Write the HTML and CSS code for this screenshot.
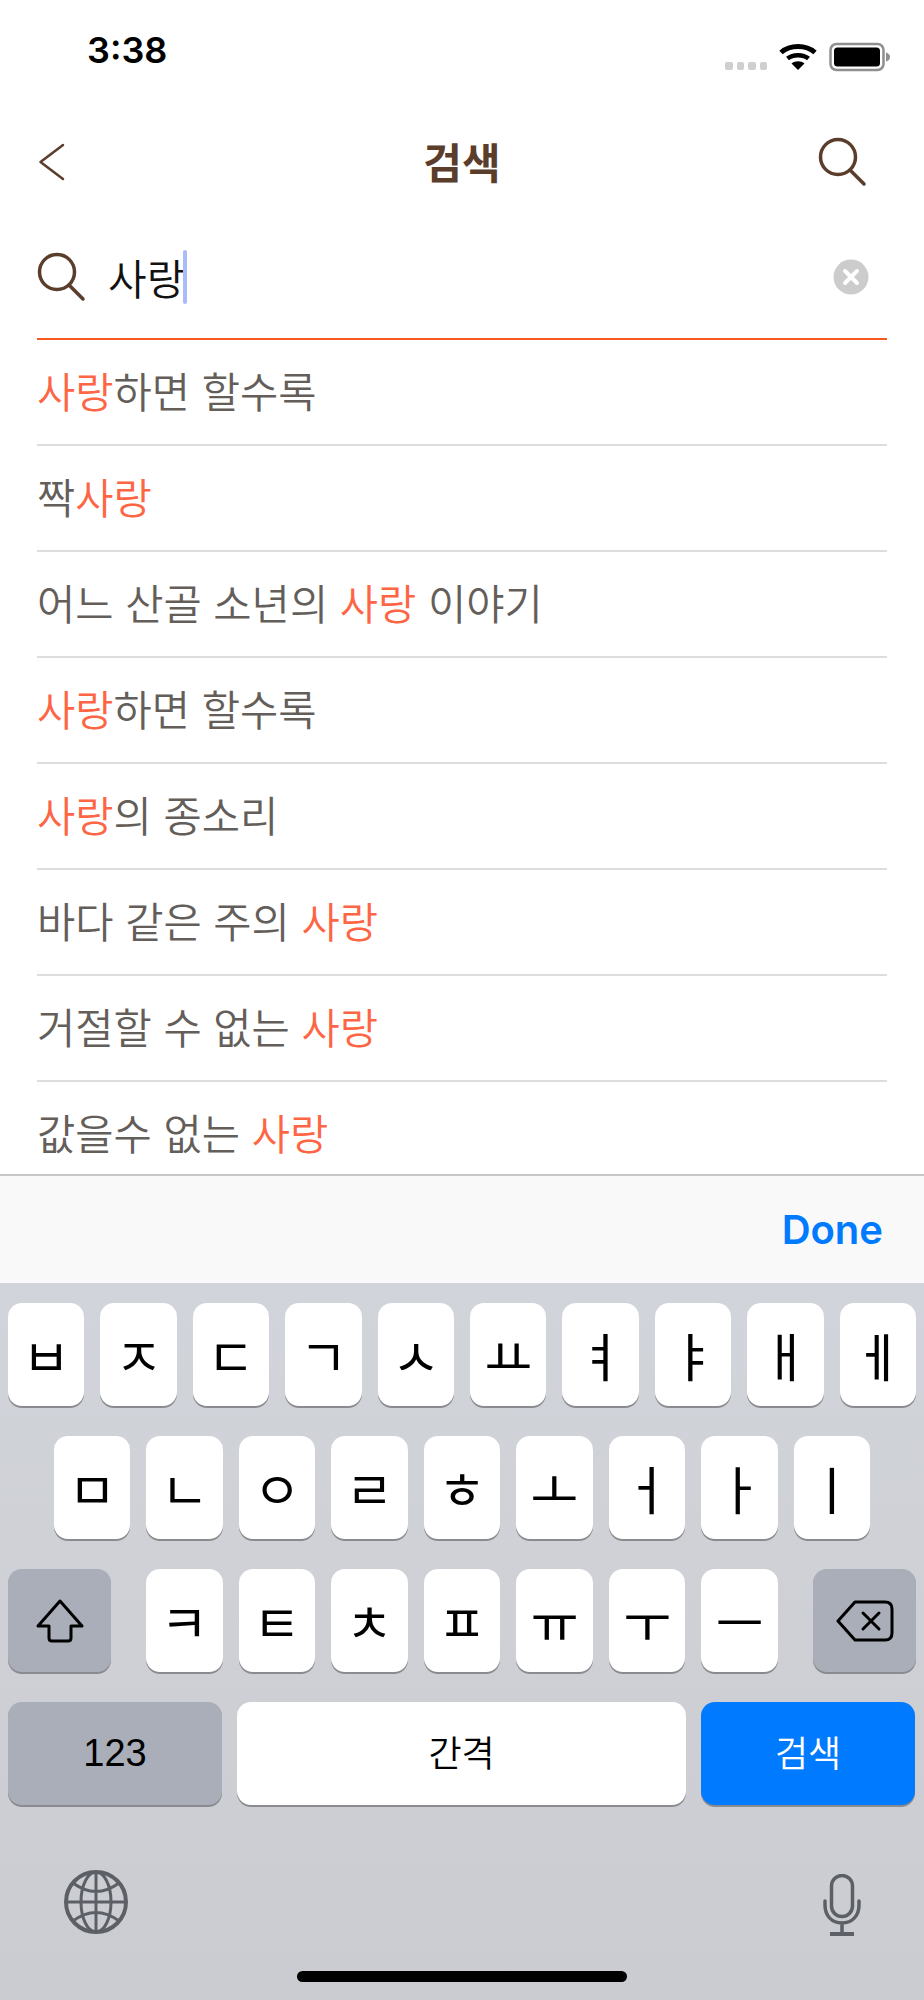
FILE: index.html
```html
<!DOCTYPE html>
<html lang="ko">
  <head>
    <meta charset="UTF-8" />
    <link rel="stylesheet" href="styles.css">
  </head>
  <body>
    <div class="phone">
      <div class="status-bar">
        <span class="time">3:38</span>
        <div class="status-icons">
          <div class="signal"><i></i><i></i><i></i><i></i></div>
          <svg class="wifi" width="38" height="28" viewBox="0 0 38 28">
            <path d="M2 9.5C11 1.500 27 1.500 36 9.500" fill="none" stroke="#000" stroke-width="5"/>
            <path d="M8.500 15.500C14 11 24 11 29.500 15.500" fill="none" stroke="#000" stroke-width="4.500"/>
            <path d="M19 27L12.500 20.500C16 17.500 22 17.500 25.500 20.500Z" fill="#000"/>
          </svg>
          <svg class="battery" width="62" height="30" viewBox="0 0 62 30">
            <rect x="1.500" y="2" width="53" height="26" rx="6" fill="none" stroke="#8f8f8f" stroke-width="2.500"/>
            <rect x="5" y="5.500" width="46" height="19" rx="3.500" fill="#000"/>
            <path d="M57 10.500C60 11.500 61 13 61 15C61 17 60 18.500 57 19.500Z" fill="#8f8f8f"/>
          </svg>
        </div>
      </div>

      <div class="nav-bar">
        <svg class="nav-back" width="30" height="40" viewBox="0 0 30 40">
          <path d="M25 3L2.500 20L25 37" fill="none" stroke="#5a3d2b" stroke-width="2.500" stroke-linecap="round" stroke-linejoin="round"/>
        </svg>
        <h1 class="nav-title">검색</h1>
        <svg class="nav-search" width="50" height="50" viewBox="0 0 50 50">
          <circle cx="20" cy="20" r="17.500" fill="none" stroke="#5a3d2b" stroke-width="3.500"/>
          <path d="M32 33L46 47" fill="none" stroke="#5a3d2b" stroke-width="3.500" stroke-linecap="round"/>
        </svg>
      </div>

      <div class="search-field">
        <svg width="50" height="50" viewBox="0 0 50 50">
          <circle cx="20" cy="20" r="17.500" fill="none" stroke="#5a3d2b" stroke-width="3.500"/>
          <path d="M32 33L46 47" fill="none" stroke="#5a3d2b" stroke-width="3.500" stroke-linecap="round"/>
        </svg>
        <span class="query">사랑</span><span class="caret"></span>
        <svg class="clear" width="36" height="36" viewBox="0 0 36 36">
          <circle cx="18" cy="18" r="17.500" fill="#cccccc"/>
          <path d="M12 12L24 24M24 12L12 24" stroke="#fff" stroke-width="4" stroke-linecap="round"/>
        </svg>
      </div>

      <ul class="results">
        <li><em>사랑</em>하면 할수록</li>
        <li>짝<em>사랑</em></li>
        <li>어느 산골 소년의 <em>사랑</em> 이야기</li>
        <li><em>사랑</em>하면 할수록</li>
        <li><em>사랑</em>의 종소리</li>
        <li>바다 같은 주의 <em>사랑</em></li>
        <li>거절할 수 없는 <em>사랑</em></li>
        <li>값을수 없는 <em>사랑</em></li>
      </ul>

      <div class="accessory">
        <span class="done">Done</span>
      </div>

      <div class="keyboard">
        <div class="key-row">
          <div class="key">ㅂ</div><div class="key">ㅈ</div><div class="key">ㄷ</div><div class="key">ㄱ</div><div class="key">ㅅ</div>
          <div class="key">ㅛ</div><div class="key">ㅕ</div><div class="key">ㅑ</div><div class="key">ㅐ</div><div class="key">ㅔ</div>
        </div>
        <div class="key-row row-mid">
          <div class="key">ㅁ</div><div class="key">ㄴ</div><div class="key">ㅇ</div><div class="key">ㄹ</div><div class="key">ㅎ</div>
          <div class="key">ㅗ</div><div class="key">ㅓ</div><div class="key">ㅏ</div><div class="key">ㅣ</div>
        </div>
        <div class="key-row">
          <div class="key key-fn key-side">
            <svg width="50" height="44" viewBox="0 0 50 44">
              <path d="M25 2L47 27H36V39Q36 42 33 42H17Q14 42 14 39V27H3Z" fill="none" stroke="#000" stroke-width="3" stroke-linejoin="round"/>
            </svg>
          </div>
          <div class="key-group">
            <div class="key">ㅋ</div><div class="key">ㅌ</div><div class="key">ㅊ</div><div class="key">ㅍ</div>
            <div class="key">ㅠ</div><div class="key">ㅜ</div><div class="key">ㅡ</div>
          </div>
          <div class="key key-fn key-side">
            <svg width="58" height="42" viewBox="0 0 58 42">
              <path d="M19 2H49Q56 2 56 9V33Q56 40 49 40H19L2 21Z" fill="none" stroke="#000" stroke-width="3" stroke-linejoin="round"/>
              <path d="M27 13L43 29M43 13L27 29" stroke="#000" stroke-width="3" stroke-linecap="round"/>
            </svg>
          </div>
        </div>
        <div class="key-row row-last">
          <div class="key key-fn key-num">123</div>
          <div class="key key-space">간격</div>
          <div class="key key-go">검색</div>
        </div>
        <div class="kb-bottom">
          <svg width="64" height="64" viewBox="0 0 64 64">
            <g fill="none" stroke="#5c6066" stroke-width="3">
              <circle cx="32" cy="32" r="30" stroke-width="4"/>
              <ellipse cx="32" cy="32" rx="15" ry="30"/>
              <path d="M32 2V62M2 32H62M9 13Q32 30 55 13M9 51Q32 34 55 51"/>
            </g>
          </svg>
          <svg class="mic" width="38" height="62" viewBox="0 0 38 62">
            <rect x="8.500" y="1.500" width="21" height="41" rx="10.500" fill="none" stroke="#5c6066" stroke-width="3.500"/>
            <path d="M2 27V31C2 42 9 49 19 49C29 49 36 42 36 31V27M19 49V59" fill="none" stroke="#5c6066" stroke-width="3.500" stroke-linecap="round"/>
            <rect x="7" y="58" width="24" height="4" fill="#5c6066"/>
          </svg>
        </div>
        <div class="home-bar"></div>
      </div>
    </div>
  </body>
</html>
```

FILE: styles.css
```css
* {
  box-sizing: border-box;
}

body {
  margin: 0;
  background: #fff;
  font-family: "Noto Sans CJK KR", "Liberation Sans", sans-serif;
}

.phone {
  width: 924px;
  height: 2000px;
  display: flex;
  flex-direction: column;
  overflow: hidden;
}

/* status bar */
.status-bar {
  height: 112px;
  padding: 28px 33px 0 87px;
  display: flex;
  justify-content: space-between;
  align-items: flex-start;
}

.time {
  font-family: "Inter", sans-serif;
  font-size: 36px;
  font-weight: 600;
  line-height: 44px;
}

.status-icons {
  display: flex;
  align-items: flex-end;
  gap: 12px;
  padding-top: 14px;
}

.signal {
  display: flex;
  gap: 4px;
  margin-bottom: 2px;
}

.signal i {
  width: 7.500px;
  height: 8px;
  border-radius: 2px;
  background: #cfcfcf;
}

.wifi {
  margin-bottom: 1px;
}

/* nav */
.nav-bar {
  height: 100px;
  padding: 0 38px;
  display: grid;
  grid-template-columns: 1fr auto 1fr;
  align-items: center;
}

.nav-title {
  margin: 0 0 3px;
  font-size: 42px;
  font-weight: 700;
  color: #5a3d2b;
}

.nav-search {
  justify-self: end;
  margin-right: 18px;
}

/* search */
.search-field {
  height: 128px;
  margin: 0 37px;
  padding: 4px 18px 0 0;
  display: flex;
  align-items: center;
  border-bottom: 2px solid #f5591f;
}

.query {
  margin-left: 21px;
  font-size: 42px;
  line-height: 56px;
  font-weight: 350;
  color: #111;
}

.caret {
  width: 4px;
  height: 54px;
  margin-left: -2px;
  border-radius: 2px;
  background: #a9bcf9;
}

.clear {
  margin-left: auto;
}

/* results */
.results {
  flex: 1;
  margin: 0 37px;
  padding: 0;
  list-style: none;
  overflow: hidden;
}

.results li {
  height: 106px;
  line-height: 100px;
  font-size: 41.600px;
  font-weight: 350;
  color: #645e5a;
  border-bottom: 2px solid #ddd;
}

.results em {
  font-style: normal;
  color: #fd6544;
}

/* accessory */
.accessory {
  height: 109px;
  padding-right: 41px;
  display: flex;
  justify-content: flex-end;
  align-items: center;
  background: #f9f9f9;
  border-top: 2px solid #c8c8c8;
}

.done {
  font-family: "Inter", sans-serif;
  font-size: 40px;
  font-weight: 600;
  color: #007aff;
}

/* keyboard */
.keyboard {
  height: 717px;
  padding: 20px 8px 0;
  display: flex;
  flex-direction: column;
  gap: 29px;
  background: linear-gradient(#d1d4da, #cbccd1);
}

.key-row {
  height: 104px;
  display: flex;
  gap: 16px;
}

.row-mid {
  padding: 0 46px;
}

.row-last {
  gap: 15px;
  padding-right: 1px;
}

.key-group {
  flex: 1;
  display: flex;
  gap: 16px;
  padding: 0 19px;
}

.key {
  flex: 1;
  height: 103px;
  display: flex;
  justify-content: center;
  align-items: center;
  border-radius: 14px;
  background: #fff;
  box-shadow: 0 2px 0 #8a8b8e;
  font-size: 52px;
  color: #000;
}

.key-fn {
  background: #a9aeb9;
}

.key-side {
  flex: 0 0 103px;
}

.key-num {
  flex: 0 0 214px;
  font-family: "Liberation Sans", sans-serif;
  font-size: 38px;
}

.key-space {
  flex: 1;
  padding-bottom: 6px;
  font-size: 36px;
  font-weight: 350;
}

.key-go {
  flex: 0 0 214px;
  padding-bottom: 6px;
  font-size: 36px;
  font-weight: 350;
  color: #fff;
  background: #007aff;
}

.kb-bottom {
  margin-top: 35px;
  padding: 0 55px 0 56px;
  display: flex;
  justify-content: space-between;
  align-items: flex-start;
}

.mic {
  margin-top: 4px;
}

.home-bar {
  align-self: center;
  width: 330px;
  height: 11px;
  margin-top: 6px;
  border-radius: 6px;
  background: #000;
}
```
